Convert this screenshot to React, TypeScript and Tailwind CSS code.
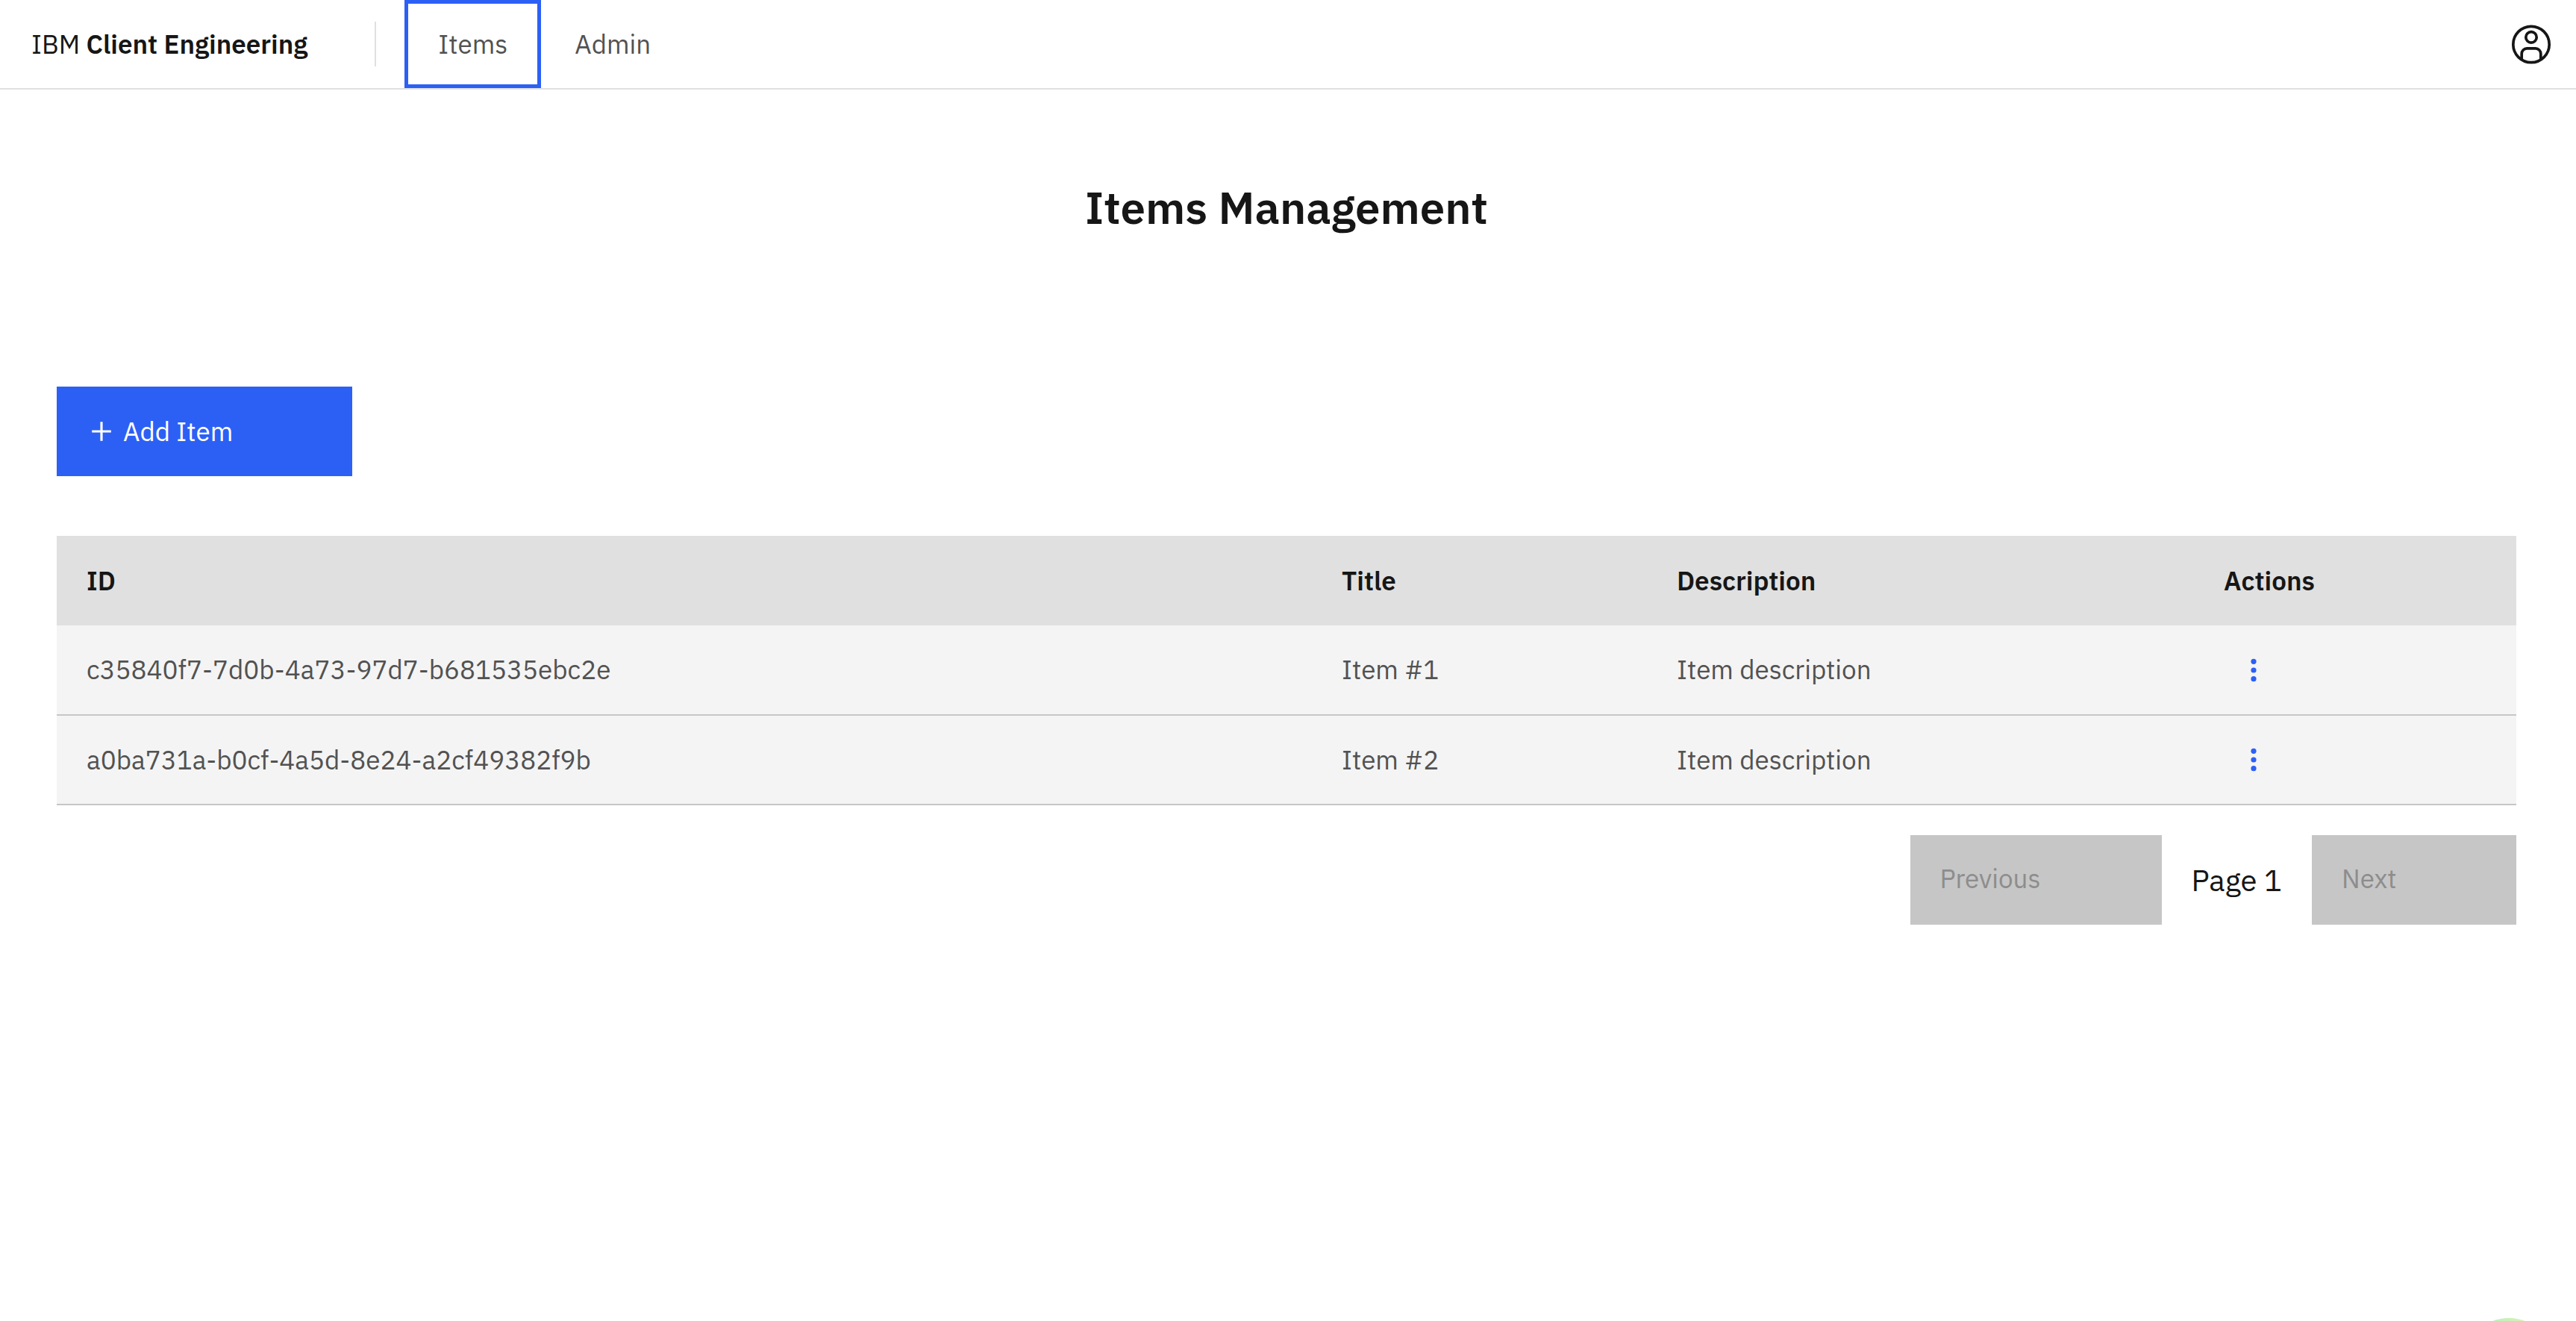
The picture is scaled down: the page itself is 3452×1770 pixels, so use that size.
import React from "react";

type Item = { id: string; title: string; description: string };

const items: Item[] = [
  { id: "c35840f7-7d0b-4a73-97d7-b681535ebc2e", title: "Item #1", description: "Item description" },
  { id: "a0ba731a-b0cf-4a5d-8e24-a2cf49382f9b", title: "Item #2", description: "Item description" },
];

function AvatarIcon() {
  return (
    <svg viewBox="0 0 60 60" className="size-[60px]" fill="none" stroke="currentColor" strokeWidth="3.7" aria-hidden="true">
      <circle cx="30" cy="30.5" r="24.2" />
      <circle cx="30" cy="20.9" r="7.2" />
      <path d="M17.2 50.7V42.9a7 7 0 0 1 7-7h11.6a7 7 0 0 1 7 7v7.8" />
    </svg>
  );
}

function PlusIcon() {
  return (
    <svg viewBox="0 0 32 32" className="size-[50px]" fill="currentColor" aria-hidden="true">
      <path d="M17 15V7.8h-2V15H7.8v2H15v7.2h2V17h7.2v-2z" />
    </svg>
  );
}

function DotsIcon() {
  return (
    <svg viewBox="0 0 40 40" className="size-10" fill="currentColor" aria-hidden="true">
      <circle cx="20" cy="8.3" r="3.6" />
      <circle cx="20" cy="20" r="3.6" />
      <circle cx="20" cy="31.7" r="3.6" />
    </svg>
  );
}

function Header() {
  return (
    <header className="flex h-[120px] items-center border-b-2 border-[#e0e0e0] text-[35px]">
      <a href="#home" className="pr-[90px] pl-[42px] whitespace-nowrap">
        IBM <span className="font-semibold">Client Engineering</span>
      </a>
      <span className="h-[60px] w-0.5 bg-[#e0e0e0]" />
      <nav className="ml-[38px] flex h-full text-[#525252]">
        <a href="#items" aria-current="page" className="flex items-center border-[5px] border-[#2c60f5] px-10">
          Items
        </a>
        <a href="#admin" className="flex items-center px-[45px]">
          Admin
        </a>
      </nav>
      <button type="button" aria-label="User profile" className="mr-[30px] ml-auto">
        <AvatarIcon />
      </button>
    </header>
  );
}

function ItemsTable() {
  return (
    <table className="mt-20 w-full table-fixed text-left">
      <thead>
        <tr className="h-[120px] bg-[#e0e0e0]">
          <th className="px-10 font-semibold">ID</th>
          <th className="w-[449px] px-10 font-semibold">Title</th>
          <th className="w-[733px] px-10 font-semibold">Description</th>
          <th className="w-[432px] px-10 font-semibold">Actions</th>
        </tr>
      </thead>
      <tbody>
        {items.map((item) => (
          <tr key={item.id} className="h-[120px] border-b-2 border-[#c6c6c6] bg-[#f4f4f4] text-[#525252]">
            <td className="px-10">{item.id}</td>
            <td className="px-10">{item.title}</td>
            <td className="px-10">{item.description}</td>
            <td className="px-10">
              <button type="button" aria-label={`Actions for ${item.title}`} className="flex size-20 items-center justify-center text-[#2c60f5]">
                <DotsIcon />
              </button>
            </td>
          </tr>
        ))}
      </tbody>
    </table>
  );
}

export default function App() {
  return (
    <div className="min-h-screen bg-white font-['IBM_Plex_Sans',Inter,sans-serif] text-[35px] leading-[45px] text-[#161616]">
      <Header />
      <main className="pt-[120px] pr-20 pl-[76px]">
        <h1 className="text-center text-[60px] leading-[75px] font-semibold">Items Management</h1>
        <button type="button" className="mt-[203px] flex h-[120px] w-[396px] items-center gap-1 bg-[#2c60f5] pl-[35px] text-white">
          <PlusIcon />
          Add Item
        </button>
        <ItemsTable />
        <div className="mt-10 flex items-center justify-end gap-10">
          <button type="button" disabled className="h-[120px] w-[337px] bg-[#c6c6c6] pb-1 pl-10 text-left text-[#8d8d8d]">
            Previous
          </button>
          <span className="text-[40px]">Page 1</span>
          <button type="button" disabled className="h-[120px] w-[274px] bg-[#c6c6c6] pb-1 pl-10 text-left text-[#8d8d8d]">
            Next
          </button>
        </div>
      </main>
      <button
        type="button"
        aria-label="Open developer tools"
        className="fixed right-[30px] -bottom-[116px] size-[120px] rounded-full bg-linear-to-r from-[#9ff0c0] to-[#f0f0b0]"
      />
    </div>
  );
}
